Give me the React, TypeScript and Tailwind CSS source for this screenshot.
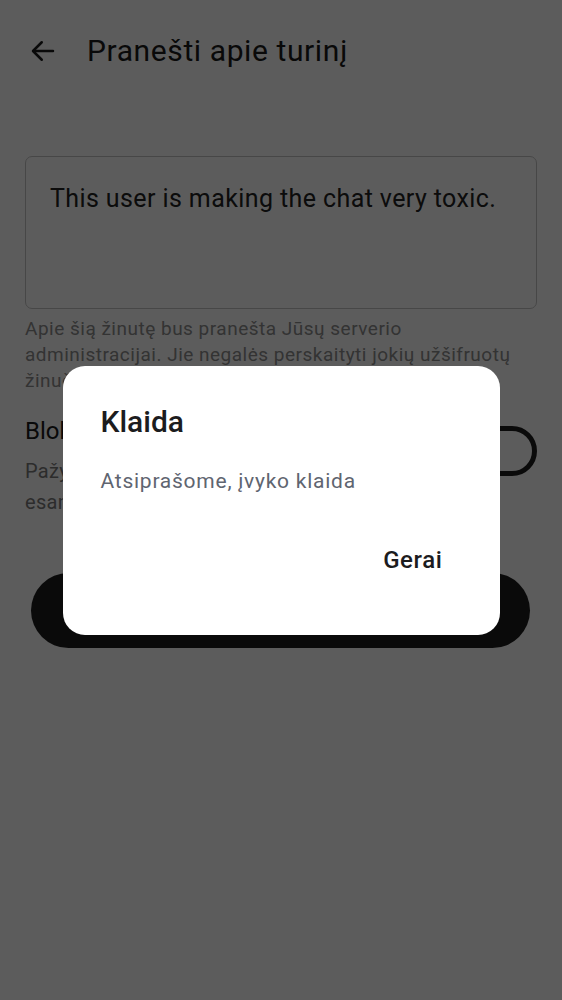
import React from "react";

export default function App() {
  return (
    <div className="relative min-h-[1000px] w-full bg-white overflow-hidden" style={{ fontFamily: "Roboto, 'Noto Sans', sans-serif" }}>
      {/* Page */}
      <div className="flex flex-col">
        <div className="flex items-center h-[100px] pl-[28px] pt-[2px]">
          <svg width="30" height="30" viewBox="0 0 24 24" fill="none" stroke="#1a1a1a" strokeWidth="2" strokeLinecap="round" strokeLinejoin="round" className="-mt-[1px]">
            <path d="M20 12H4.5" />
            <path d="M11 5l-7 7 7 7" />
          </svg>
          <h1 className="ml-[29px] text-[30px] text-[#1a1a1a] leading-none tracking-[0.6px]">Pranešti apie turinį</h1>
        </div>
        <div className="px-[25px] pt-[56px]">
          <div className="h-[153px] rounded-[7px] border-[1.5px] border-[#c4c4c4] px-[24px] pt-[26px]">
            <p className="text-[25px] text-[#222] leading-[32px] tracking-[0.4px]">This user is making the chat very toxic.</p>
          </div>
          <p className="mt-[7px] text-[19px] leading-[26px] text-[#8e8e8e] tracking-[0.5px]">
            Apie šią žinutę bus pranešta Jūsų serverio administracijai. Jie negalės perskaityti jokių užšifruotų žinučių.
          </p>
          <div className="mt-[21px] flex items-start justify-between">
            <div className="flex-1 pr-4">
              <p className="text-[24px] leading-[32px] text-[#1a1a1a]">Blokuoti naudotoją</p>
              <p className="mt-[9px] text-[20px] leading-[31px] text-[#7a7a7a] tracking-[0.3px]">Pažymėkite, kad būtų paslėptos visos jo<br />esamos ir būsimos žinutės</p>
            </div>
            <div className="mt-[11px] w-[84px] h-[50px] rounded-full border-[5px] border-[#1d1d1d] flex items-center pl-[6px]">
              <div className="w-[26px] h-[26px] rounded-full bg-[#1d1d1d]" />
            </div>
          </div>
          <button className="mt-[55px] mx-[6px] w-[499px] h-[75px] rounded-full bg-[#1c1c1c] text-white text-[22px]">Pranešti</button>
        </div>
      </div>

      {/* Overlay */}
      <div className="absolute inset-0 bg-black/[0.64] flex items-center justify-center">
        <div className="w-[437px] h-[269px] bg-white rounded-[22px] flex flex-col pl-[38px] pr-[57px] pt-[38px]">
          <h2 className="text-[30px] leading-[36px] font-medium text-[#1c1c1e]">Klaida</h2>
          <p className="mt-[28px] text-[21px] leading-[26px] text-[#5f6570] tracking-[0.75px]">Atsiprašome, įvyko klaida</p>
          <div className="mt-[51px] flex justify-end">
            <span className="text-[24px] leading-[30px] font-medium text-[#1c1c1e] tracking-[0.6px]">Gerai</span>
          </div>
        </div>
      </div>
    </div>
  );
}
